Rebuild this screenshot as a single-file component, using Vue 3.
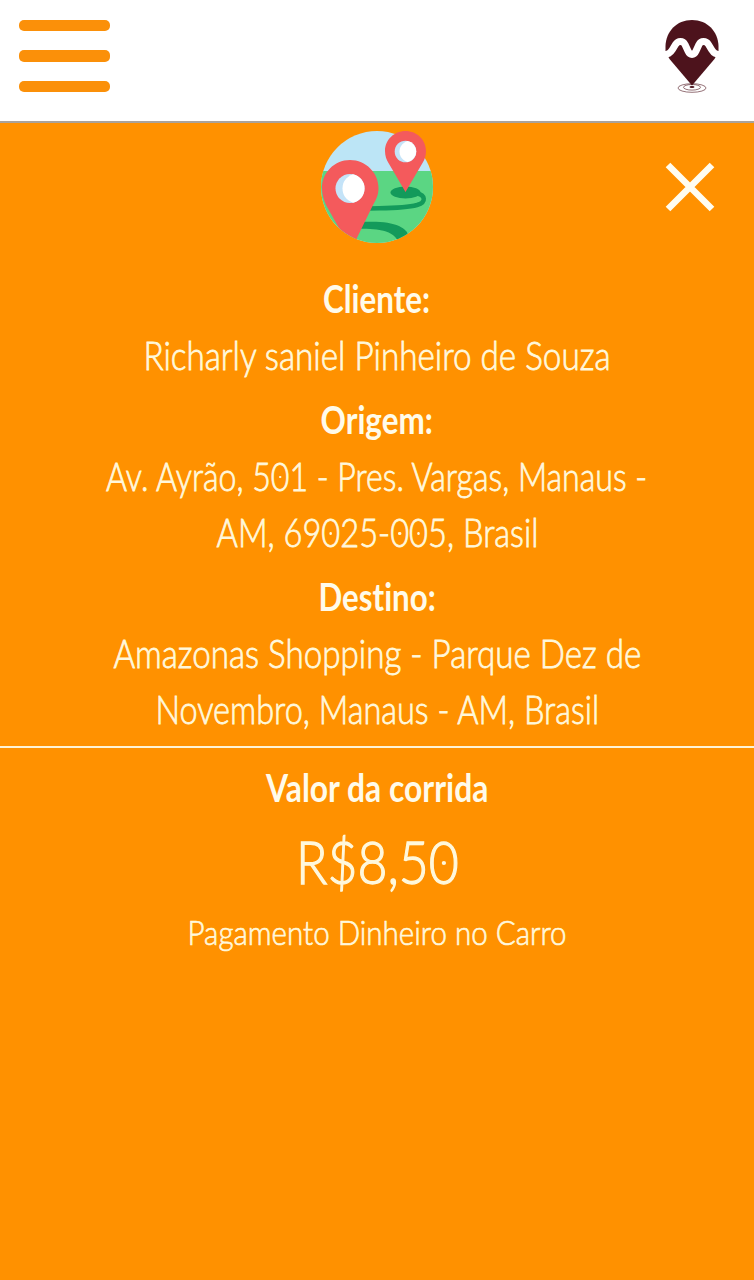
<template>
  <div class="screen">
    <header class="topbar">
      <button class="menu-btn" type="button" aria-label="Menu">
        <span></span>
        <span></span>
        <span></span>
      </button>
      <svg class="logo" width="60" height="80" viewBox="0 0 60 80" aria-hidden="true">
        <path
          fill="#4d131c"
          d="M30 5C14.500 5 4 16.500 3.500 31L3.500 36.500L7.500 44L30 70.500L52.500 44L56.500 36.500L56.500 31C56 16.500 45.500 5 30 5Z"
        />
        <path
          fill="none"
          stroke="#fff"
          stroke-width="7"
          stroke-linejoin="round"
          d="M1 39.500C6 39.500 8 38.500 10.500 34.500L13.500 29.500C16 25.500 21 25.500 23 29.500L26 36C28 40.500 32 40.500 34 36L37 29.500C39 25.500 44 25.500 46.500 29.500L49.500 34.500C52 38.500 54 39.500 59 39.500"
        />
        <g fill="none" stroke="#4d131c" stroke-width="0.600">
          <ellipse cx="30" cy="73" rx="14" ry="4.300" />
          <ellipse cx="30" cy="72.300" rx="8.500" ry="2.800" />
        </g>
        <ellipse cx="30" cy="72" rx="2.500" ry="1" fill="#4d131c" />
      </svg>
    </header>

    <main class="ride">
      <div class="ride-head">
        <svg class="route" width="114" height="114" viewBox="0 0 114 114" aria-hidden="true">
          <defs>
            <clipPath id="route-clip">
              <circle cx="57" cy="57" r="56" />
            </clipPath>
          </defs>
          <g clip-path="url(#route-clip)">
            <rect width="114" height="114" fill="#bce5f6" />
            <rect y="41" width="114" height="73" fill="#5bd683" />
            <ellipse cx="85.500" cy="62.500" rx="15" ry="6" fill="#139a5b" />
            <path
              d="M97 63.500C105 65 107 72 97 75C84 78.500 66 78 49 78.500"
              fill="none"
              stroke="#139a5b"
              stroke-width="4.500"
            />
            <path
              d="M41 92C57 91 71 92 79 96C85 99 88 102 88 106L78 111C73 102 62 98 35 99Z"
              fill="#139a5b"
            />
            <path
              d="M30 30C14 30 2 43 2 58C2 65 4 70 6 75L28 114H34L53 75C56 70 58.500 65 58.500 58C58.500 43 46 30 30 30Z"
              fill="#f45a5c"
            />
            <circle cx="30" cy="58.500" r="14.500" fill="#c4e3f8" />
            <path
              d="M33 44.300A14.500 14.500 0 0 1 33 72.700C26 70 22.500 65 22.500 58.500C22.500 52 26 47 33 44.300Z"
              fill="#fff"
            />
          </g>
          <path
            d="M85.500 1C74 1 65 10 65 21C65 26 66.500 30 68.500 33L85.500 62L102.500 33C104.500 30 106 26 106 21C106 10 97 1 85.500 1Z"
            fill="#f45a5c"
          />
          <circle cx="85.500" cy="21.500" r="10.800" fill="#c4e3f8" />
          <path
            d="M87.500 10.900A10.800 10.800 0 0 1 87.500 32.100C82 30 79.500 26 79.500 21.500C79.500 17 82 13 87.500 10.900Z"
            fill="#fff"
          />
        </svg>
        <button class="close-btn" type="button" aria-label="Fechar">
          <svg width="50" height="50" viewBox="0 0 50 50">
            <path d="M3 3L47 47M47 3L3 47" stroke="#fffdf0" stroke-width="6.500" />
          </svg>
        </button>
      </div>

      <section v-for="(block, b) in blocks" :key="b" :class="block.name">
        <p v-for="line in block.lines" :key="line.text" :class="line.kind">
          <span class="fit" :data-width="line.width"
            ><template v-for="(part, i) in line.text.split(/(0)/)" :key="i"
              ><span v-if="part === '0'" class="zero">0</span
              ><template v-else>{{ part }}</template></template
            ></span
          >
        </p>
      </section>
    </main>
  </div>
</template>

<script setup>
import { onMounted } from 'vue'

// Line widths of the condensed lettering, in px
const blocks = [
  {
    name: 'trip',
    lines: [
      { kind: 'label', text: 'Cliente:', width: 107 },
      { kind: 'value', text: 'Richarly saniel Pinheiro de Souza', width: 467 },
      { kind: 'label', text: 'Origem:', width: 112 },
      { kind: 'value', text: 'Av. Ayrão, 501 - Pres. Vargas, Manaus -', width: 541 },
      { kind: 'value', text: 'AM, 69025-005, Brasil', width: 322 },
      { kind: 'label', text: 'Destino:', width: 117 },
      { kind: 'value', text: 'Amazonas Shopping - Parque Dez de', width: 528 },
      { kind: 'value', text: 'Novembro, Manaus - AM, Brasil', width: 444 },
    ],
  },
  {
    name: 'fare',
    lines: [
      { kind: 'label', text: 'Valor da corrida', width: 222 },
      { kind: 'price', text: 'R$8,50', width: 163 },
      { kind: 'payment', text: 'Pagamento Dinheiro no Carro', width: 379 },
    ],
  },
]

// Condense each line to its own width
onMounted(() => {
  document.querySelectorAll('.fit').forEach((el) => {
    el.style.transform = `scaleX(${Number(el.dataset.width) / el.offsetWidth})`
  })
})
</script>

<style>
body {
  margin: 0;
  background: #ff9100;
}
</style>

<style scoped>
.screen {
  min-height: 1280px;
  overflow: hidden;
  display: flex;
  flex-direction: column;
  font-family: Lato, 'Open Sans', sans-serif;
  font-weight: 300;
  font-variant-ligatures: none;
  color: #fff8dc;
  background: #ff9100;
}

.topbar {
  box-sizing: border-box;
  height: 123px;
  padding: 15px 32px 0 19px;
  display: flex;
  justify-content: space-between;
  align-items: flex-start;
  background: #fff;
  border-bottom: 2px solid #aaa39b;
}

.menu-btn {
  display: flex;
  flex-direction: column;
  gap: 19px;
  padding: 5px 0 0;
  border: none;
  background: none;
}

.menu-btn span {
  width: 91px;
  height: 11.300px;
  border-radius: 5px;
  background: #fb9009;
}

.ride-head {
  box-sizing: border-box;
  display: grid;
  grid-template-columns: 1fr 114px 1fr;
  height: 147px;
  padding-top: 7px;
}

.route {
  display: block;
  grid-column: 2;
}

.close-btn {
  grid-column: 3;
  justify-self: end;
  align-self: start;
  margin: 32px 39px 0 0;
  padding: 0;
  border: none;
  background: none;
}

.close-btn svg {
  display: block;
}

p {
  margin: 0;
  text-align: center;
  white-space: nowrap;
  display: flex;
  justify-content: center;
}

.fit {
  flex: none;
}

.label {
  font-size: 39px;
  line-height: 57px;
  font-weight: 700;
  color: #fffbea;
}

.value {
  font-size: 39px;
  line-height: 56.500px;
  -webkit-text-stroke: 0.800px currentColor;
}

.value + .label {
  margin-top: 7px;
}

.trip {
  padding-bottom: 8px;
  border-bottom: 2px solid #fff3d5;
}

.fare {
  padding-top: 11px;
}

.price {
  font-size: 60px;
  line-height: 90px;
  -webkit-text-stroke: 1.300px currentColor;
}

.payment {
  font-size: 34px;
  line-height: 52px;
  -webkit-text-stroke: 0.700px currentColor;
}

.zero {
  position: relative;
}

.zero::after {
  content: '';
  position: absolute;
  left: 50%;
  top: 53%;
  width: 0.090em;
  height: 0.070em;
  margin: -0.035em 0 0 -0.045em;
  border-radius: 50%;
  background: currentColor;
}
</style>
